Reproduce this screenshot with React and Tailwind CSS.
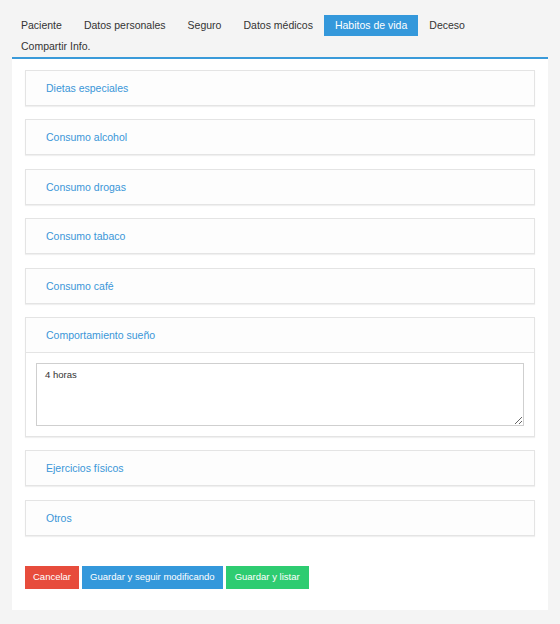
const tabs = [
  "Paciente",
  "Datos personales",
  "Seguro",
  "Datos médicos",
  "Habitos de vida",
  "Deceso",
  "Compartir Info.",
];

const sections = [
  "Dietas especiales",
  "Consumo alcohol",
  "Consumo drogas",
  "Consumo tabaco",
  "Consumo café",
  "Comportamiento sueño",
  "Ejercicios físicos",
  "Otros",
];

export default function App() {
  return (
    <div
      className="w-[560px] h-[624px] bg-[#f4f4f4] pt-[15px] px-[10px]"
      style={{ fontFamily: '"Liberation Sans", Arial, sans-serif' }}
    >
      {/* tabs */}
      <div className="flex flex-wrap pr-[40px]">
        {tabs.map((t) => (
          <div
            key={t}
            className={
              t === "Habitos de vida"
                ? "h-[21px] leading-[21px] px-[11px] text-[10.5px] bg-[#3498db] text-white"
                : "h-[21px] leading-[21px] px-[11px] text-[10.5px] text-[#333]"
            }
          >
            {t}
          </div>
        ))}
      </div>

      <div className="mx-[2px] h-[2px] bg-[#3a9ad9]" />

      <div className="mx-[2px] bg-white px-[13px] pt-[11px] pb-[21px]">
        <div className="flex flex-col gap-[13.4px]">
          {sections.map((s) => (
            <div
              key={s}
              className="border border-[#e4e4e4] bg-[#fdfdfd] shadow-[0_1px_1px_rgba(0,0,0,0.06)]"
            >
              <div className="h-[34px] leading-[34px] pl-[20px] text-[10.5px] text-[#3a96d8]">
                {s}
              </div>
              {s === "Comportamiento sueño" && (
                <div className="border-t border-[#e4e4e4] p-[10px] bg-white">
                  <textarea
                    className="block w-full h-[63px] border border-[#cfcfcf] px-[8px] py-[4px] text-[9.5px] text-[#333] outline-none"
                    defaultValue="4 horas"
                  />
                </div>
              )}
            </div>
          ))}
        </div>

        <div className="flex gap-[3px] mt-[30px]">
          <button className="h-[23px] px-[8px] bg-[#e74c3c] text-white text-[9.5px]">
            Cancelar
          </button>
          <button className="h-[23px] px-[8px] bg-[#3498db] text-white text-[9.5px]">
            Guardar y seguir modificando
          </button>
          <button className="h-[23px] px-[9px] bg-[#2ecc71] text-white text-[9.5px]">
            Guardar y listar
          </button>
        </div>
      </div>
    </div>
  );
}
